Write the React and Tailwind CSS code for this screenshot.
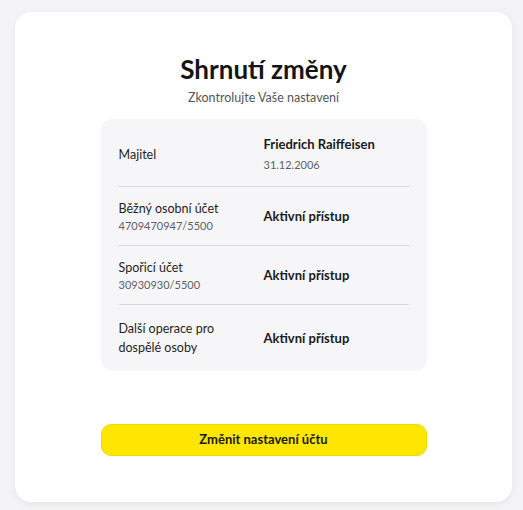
const rows = [
  {
    label: "Majitel",
    value: "Friedrich Raiffeisen",
    valueSub: "31.12.2006",
    pad: "pt-4 pb-3",
  },
  { label: "Běžný osobní účet", sub: "4709470947/5500", value: "Aktivní přístup", pad: "py-3" },
  { label: "Spořicí účet", sub: "30930930/5500", value: "Aktivní přístup", pad: "py-3" },
  { label: "Další operace pro dospělé osoby", value: "Aktivní přístup", pad: "py-[14px]" },
];

const SummaryRow = ({ row, last }) => {
  return (
    <div
      className={
        "grid grid-cols-[145px_1fr] items-center " +
        (last ? "" : "border-b border-[#d9d9dc]")
      }
    >
      <div className={row.pad + " pr-4"}>
        <div className="text-[12.5px] leading-[19px] text-[#1f1f1f]">{row.label}</div>
        {row.sub && (
          <div className="text-[11px] leading-[15px] text-[#5f5f66]">{row.sub}</div>
        )}
      </div>
      <div className={row.pad}>
        <div className="text-[13px] leading-[19px] font-bold text-[#1a1a1a]">{row.value}</div>
        {row.valueSub && (
          <div className="text-[11px] leading-[18px] mt-[2px] text-[#5f5f66]">{row.valueSub}</div>
        )}
      </div>
    </div>
  );
};

export default function App() {
  return (
    <div
      className="min-h-[510px] bg-[#f3f3f5] pt-3 pl-[15px] pr-[11px] pb-2"
      style={{ fontFamily: "Lato, 'Noto Sans', sans-serif" }}
    >
      <div className="h-[490px] bg-white rounded-2xl shadow-[0_2px_6px_rgba(0,0,0,0.06)] flex flex-col items-center pt-[42px]">
        <h1 className="text-[26px] leading-[30px] font-bold text-[#141414]">Shrnutí změny</h1>
        <p className="mt-[5px] text-[12.5px] leading-[18px] text-[#555559]">
          Zkontrolujte Vaše nastavení
        </p>
        <div className="mt-[12px] w-[326px] bg-[#f6f6f8] rounded-xl px-[18px]">
          {rows.map((row, i) => (
            <SummaryRow key={i} row={row} last={i === rows.length - 1} />
          ))}
        </div>
        <button className="mt-[53px] w-[326px] h-8 rounded-[10px] bg-[#fee600] border border-[#f2d900] text-[13px] font-bold text-[#1a1a1a]">
          Změnit nastavení účtu
        </button>
      </div>
    </div>
  );
}
